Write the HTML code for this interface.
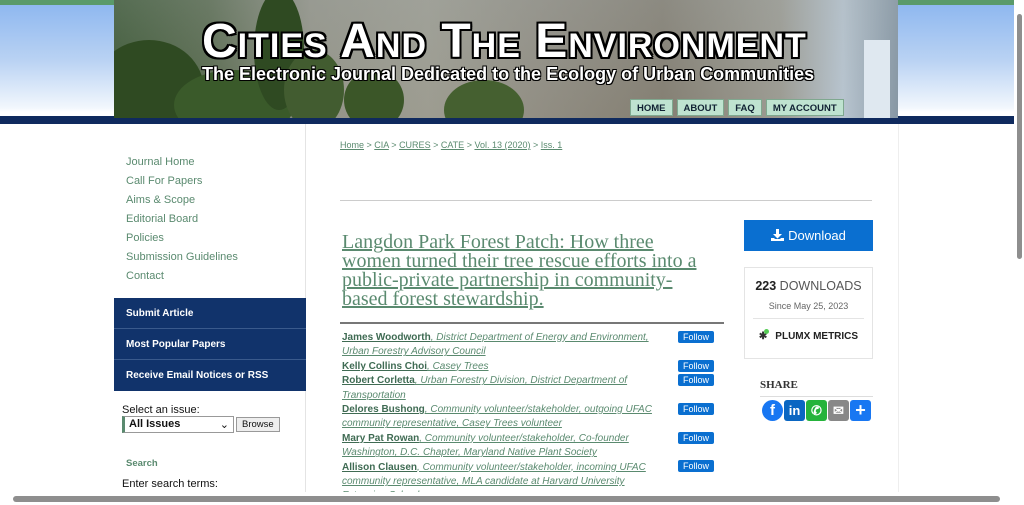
<!DOCTYPE html>
<html><head><style>
*{margin:0;padding:0;box-sizing:border-box}
body{width:1024px;height:505px;overflow:hidden;background:#fff;font-family:"Liberation Sans",sans-serif;position:relative}
.bgtop{position:absolute;left:0;top:0;width:1014px;height:116px;background:linear-gradient(#5a9a6a 0,#5a9a6a 5px,#8fb8f0 5px,#b9d2f3 60px,#f2f7fd 108px,#fff 112px)}
.navy{position:absolute;left:0;top:116px;width:1014px;height:8px;background:#0f2a5e}
.hdr{position:absolute;left:114px;top:0;width:784px;height:118px;overflow:hidden;
background:linear-gradient(180deg,rgba(140,150,150,.3),rgba(60,70,60,.1)),linear-gradient(90deg,#3e5b35 0,#5c6e50 12%,#9d9c90 25%,#a8a69a 40%,#9a958a 55%,#8c8578 70%,#a7a59c 85%,#c6d3e0 93%,#8fa0b0 100%)}
.hdr .tree{position:absolute;border-radius:50%;background:#2f4a22}
.title{position:absolute;left:88px;top:14px;color:#fff;font-weight:bold;font-size:48px;letter-spacing:1px;font-variant:small-caps;
text-shadow:-2px -2px 0 #000,2px -2px 0 #000,-2px 2px 0 #000,2px 2px 0 #000,0 2px 0 #000,0 -2px 0 #000,2px 0 0 #000,-2px 0 0 #000;white-space:nowrap}
.sub{position:absolute;left:88px;top:64px;color:#fff;font-weight:bold;font-size:18px;white-space:nowrap;
text-shadow:-1px -1px 0 #000,1px -1px 0 #000,-1px 1px 0 #000,1px 1px 0 #000}
.tabs{position:absolute;left:516px;top:99px;display:flex;gap:4px}
.tabs div{background:#bfe3d0;border:1px solid #7fa88f;font-size:9.5px;font-weight:bold;color:#123;padding:3px 6px 2px;height:17px}
.side{position:absolute;left:114px;top:124px;width:192px;height:370px;border-right:1px solid #e4e4e4}
.links{position:absolute;left:12px;top:32px;font-size:11px;color:#5a8a6f}
.links div{height:19px}
.nav{position:absolute;left:0;top:174px;width:192px;background:#11336b}
.nav div{height:31px;border-bottom:1px solid #3a5a8c;color:#fff;font-weight:bold;font-size:10px;padding:10px 12px}
.nav div:last-child{border:none}
.sel{position:absolute;left:8px;top:280px;font-size:11px;color:#111}
.box{display:inline-block;width:112px;height:17px;border:1px solid #999;border-left:3px solid #5a8a6f;font-weight:bold;font-size:11px;padding:1px 4px;vertical-align:middle}
.btn{display:inline-block;border:1px solid #999;background:#eee;font-size:9.5px;padding:1px 5px;vertical-align:middle;margin-left:2px}
.main{position:absolute;left:340px;top:140px;width:540px}
.crumb{font-size:9px;color:#5a8a6f}
.crumb u{color:#5a8a6f}
.hr1{position:absolute;left:0;top:60px;width:532px;height:1px;background:#ccc}
.art{position:absolute;left:2px;top:93px;width:372px;font-family:"Liberation Serif",serif;font-size:20px;line-height:19px;color:#5a8a6f;text-decoration:underline}
.hr2{position:absolute;left:0;top:182px;width:384px;height:2px;background:#777}
.auth{position:absolute;left:2px;top:191px;width:384px;font-size:10px;line-height:14.4px;color:#5a8a6f}
.auth b{color:#3f6b53;text-decoration:underline}
.auth i{text-decoration:underline}
.fol{position:absolute;left:338px;width:36px;height:12px;background:#0a6fd0;color:#fff;font-size:9px;text-align:center;border-radius:2px;line-height:12px}
.dl{position:absolute;left:744px;top:220px;width:129px;height:31px;background:#0a6fd0;color:#fff;font-size:13px;text-align:center;line-height:31px}
.stat{position:absolute;left:744px;top:267px;width:129px;height:92px;border:1px solid #e4e4e4;text-align:center}
.share{position:absolute;left:760px;top:379px;font-family:"Liberation Serif",serif;font-weight:bold;font-size:11px;color:#333}
.icons{position:absolute;left:762px;top:400px;display:flex;gap:1px}
.icons div{width:21px;height:21px;border-radius:3px;color:#fff;font-weight:bold;font-size:13px;text-align:center;line-height:21px}
.vs{position:absolute;right:0;top:0;width:10px;height:492px;background:#fff}
.vs div{position:absolute;left:3px;top:14px;width:5px;height:245px;background:#8e8e8e;border-radius:3px}
.hs{position:absolute;left:0;bottom:0;width:1024px;height:13px;background:#fff}
.hs div{position:absolute;left:13px;top:4px;width:987px;height:6px;background:#8e8e8e;border-radius:3px}
</style></head><body>
<div class="bgtop"></div><div class="navy"></div>
<div class="hdr">
<div class="tree" style="left:-20px;top:40px;width:110px;height:100px"></div>
<div class="tree" style="left:60px;top:70px;width:120px;height:70px;background:#3a5a2a"></div>
<div class="tree" style="left:140px;top:-10px;width:50px;height:120px"></div>
<div class="tree" style="left:170px;top:50px;width:60px;height:80px;background:#425c30"></div>
<div class="tree" style="left:230px;top:70px;width:60px;height:60px;background:#3b5628"></div>
<div class="tree" style="left:330px;top:80px;width:80px;height:60px;background:#456030"></div>
<div class="tree" style="left:750px;top:40px;width:26px;height:90px;background:#dfe8f0;border-radius:0"></div>
<div class="title">Cities And The Environment</div>
<div class="sub">The Electronic Journal Dedicated to the Ecology of Urban Communities</div>
<div class="tabs"><div>HOME</div><div>ABOUT</div><div>FAQ</div><div>MY ACCOUNT</div></div>
</div>
<div class="side">
<div class="links"><div>Journal Home</div><div>Call For Papers</div><div>Aims &amp; Scope</div><div>Editorial Board</div><div>Policies</div><div>Submission Guidelines</div><div>Contact</div></div>
<div class="nav"><div>Submit Article</div><div>Most Popular Papers</div><div>Receive Email Notices or RSS</div></div>
<div class="sel">Select an issue:<br><span class="box">All Issues <span style="float:right;font-weight:normal">⌄</span></span><span class="btn">Browse</span></div>
<div style="position:absolute;left:12px;top:334px;font-size:9.5px;font-weight:bold;color:#5a8a6f">Search</div>
<div style="position:absolute;left:8px;top:354px;font-size:11px;color:#111">Enter search terms:</div>
</div>
<div class="main">
<div class="crumb"><u>Home</u> &gt; <u>CIA</u> &gt; <u>CURES</u> &gt; <u>CATE</u> &gt; <u>Vol. 13 (2020)</u> &gt; <u>Iss. 1</u></div>
<div class="hr1"></div>
<div class="art">Langdon Park Forest Patch: How three women turned their tree rescue efforts into a public-private partnership in community-based forest stewardship.</div>
<div class="hr2"></div>
<div class="auth">
<div><b>James Woodworth</b><i>, District Department of Energy and Environment,<br>Urban Forestry Advisory Council</i></div>
<div><b>Kelly Collins Choi</b><i>, Casey Trees</i></div>
<div><b>Robert Corletta</b><i>, Urban Forestry Division, District Department of<br>Transportation</i></div>
<div><b>Delores Bushong</b><i>, Community volunteer/stakeholder, outgoing UFAC<br>community representative, Casey Trees volunteer</i></div>
<div><b>Mary Pat Rowan</b><i>, Community volunteer/stakeholder, Co-founder<br>Washington, D.C. Chapter, Maryland Native Plant Society</i></div>
<div><b>Allison Clausen</b><i>, Community volunteer/stakeholder, incoming UFAC<br>community representative, MLA candidate at Harvard University<br>Extension School</i></div>
</div>
<div class="fol" style="top:191px">Follow</div>
<div class="fol" style="top:220px">Follow</div>
<div class="fol" style="top:234px">Follow</div>
<div class="fol" style="top:263px">Follow</div>
<div class="fol" style="top:292px">Follow</div>
<div class="fol" style="top:320px">Follow</div>
</div>
<div class="dl"><svg width="13" height="12" viewBox="0 0 13 12" style="vertical-align:-1px;margin-right:4px"><path d="M5 0h3v5h3L6.5 9.5 2 5h3z M0 9h3l1 1h5l1-1h3v3H0z" fill="#fff"/></svg>Download</div>
<div class="stat">
<div style="margin-top:11px;font-size:12.5px;color:#555"><b style="color:#222">223</b> DOWNLOADS</div>
<div style="margin-top:8px;font-size:9px;color:#666">Since May 25, 2023</div>
<div style="margin:7px 8px 0;border-top:1px solid #e4e4e4"></div>
<div style="margin-top:12px;font-size:10px;font-weight:bold;color:#222"><span style="color:#333">✱</span><span style="display:inline-block;width:5px;height:5px;border-radius:50%;background:#5c5;vertical-align:top;margin:-2px 6px 0 -3px"></span>PLUMX METRICS</div>
</div>
<div class="share">SHARE</div>
<div style="position:absolute;left:760px;top:396px;width:113px;height:1px;background:#ddd"></div>
<div class="icons"><div style="background:#1877f2;border-radius:50%;font-size:15px">f</div><div style="background:#0a66c2">in</div><div style="background:#25b33b">✆</div><div style="background:#888">✉</div><div style="background:#1877f2;font-size:18px">+</div></div>
<div style="position:absolute;left:898px;top:124px;width:1px;height:368px;background:#eee"></div>
<div class="vs"><div></div></div>
<div class="hs"><div></div></div>
</body></html>
